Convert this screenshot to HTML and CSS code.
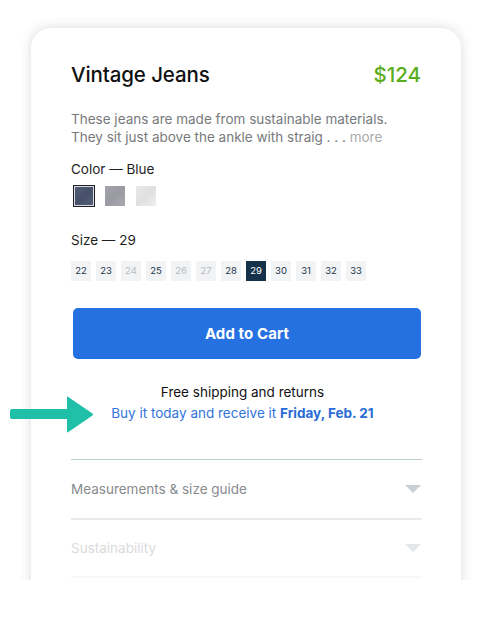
FILE: index.html
```html
<!DOCTYPE html>
<html lang="en">
<head>
<meta charset="utf-8">
<title>Vintage Jeans</title>
<link rel="stylesheet" href="styles.css">
</head>
<body>
<div class="stage">
  <div class="card">
    <div class="head">
      <h1 class="title">Vintage Jeans</h1>
      <span class="price">$124</span>
    </div>
    <p class="desc">These jeans are made from sustainable materials. They sit just above the ankle with straig . . . <span class="more">more</span></p>
    <div class="label">Color — Blue</div>
    <div class="swatches">
      <span class="swatch blue selected"></span>
      <span class="swatch grey"></span>
      <span class="swatch white"></span>
    </div>
    <div class="label size-label">Size — 29</div>
    <div class="sizes">
      <span class="size">22</span>
      <span class="size">23</span>
      <span class="size off">24</span>
      <span class="size">25</span>
      <span class="size off">26</span>
      <span class="size off">27</span>
      <span class="size">28</span>
      <span class="size on">29</span>
      <span class="size">30</span>
      <span class="size">31</span>
      <span class="size">32</span>
      <span class="size">33</span>
    </div>
    <button class="cart">Add to Cart</button>
    <div class="ship">
      <div>Free shipping and returns</div>
      <div class="deliver">Buy it today and receive it <b>Friday, Feb. 21</b></div>
    </div>
    <div class="acc first">
      <span>Measurements &amp; size guide</span>
      <span class="caret"></span>
    </div>
    <div class="acc second">
      <span>Sustainability</span>
      <span class="caret"></span>
    </div>
    <div class="acc-end"></div>
  </div>
  <svg class="arrow" width="84" height="38" viewBox="0 0 84 38" aria-hidden="true">
    <rect x="0" y="13" width="60" height="10" rx="2" fill="#20bfa8"/>
    <path d="M57 1.5 Q57 0 58.3 0.9 L82.5 17.6 Q83.5 18.5 82.5 19.4 L58.3 36.1 Q57 37 57 35.5 Z" fill="#20bfa8"/>
  </svg>
</div>
</body>
</html>
```
FILE: styles.css
```css
* { box-sizing: border-box; }
html, body { margin: 0; padding: 0; background: #fff; }
body { font-family: "Inter", "Noto Sans", sans-serif; color: #1a1a1a; }

.stage {
  position: relative;
  height: 580px;
  overflow: hidden;
  padding-top: 28px;
}

.card {
  margin-left: 31px;
  width: 430px;
  background: #fff;
  border-radius: 20px;
  box-shadow: 0 0 12px rgba(40, 50, 55, 0.18);
  padding: 33px 39px 60px 40px;
}

.head {
  display: flex;
  justify-content: space-between;
  align-items: baseline;
  height: 28px;
}
.title {
  margin: 0;
  font-size: 20.5px;
  line-height: 28px;
  font-weight: 500;
  color: #111;
  letter-spacing: -0.1px;
}
.price {
  font-size: 20.5px;
  line-height: 28px;
  font-weight: 500;
  color: #5aac1a;
  margin-right: 1px;
}

.desc {
  margin: 21px 0 0;
  max-width: 325px;
  font-size: 13.5px;
  line-height: 18px;
  color: #777a7d;
}
.more { color: #a9abad; }

.label {
  margin-top: 14px;
  font-size: 13.5px;
  line-height: 18px;
  color: #1e1e1e;
}
.size-label { margin-top: 25px; }

.swatches {
  display: flex;
  gap: 11px;
  margin-top: 8px;
  padding-left: 3px;
}
.swatch {
  width: 20px;
  height: 20px;
  display: block;
}
.swatch.blue {
  background: linear-gradient(135deg, #535d78 0%, #475069 50%, #58617a 100%);
}
.swatch.grey {
  background: linear-gradient(135deg, #a5a5ad 0%, #9a9aa2 50%, #aaaab1 100%);
}
.swatch.white {
  background: linear-gradient(135deg, #e9e9e9 0%, #e0e0e0 50%, #efefef 100%);
}
.swatch.selected {
  box-shadow: inset 0 0 0 1px #d8dce4, 0 0 0 1px #1e1e22;
}

.sizes {
  display: flex;
  gap: 5px;
  margin-top: 12px;
}
.size {
  width: 20px;
  height: 20px;
  background: #f2f3f4;
  color: #23384b;
  font-size: 9.5px;
  line-height: 20px;
  text-align: center;
}
.size.off { color: #b9bcbf; }
.size.on { background: #16324a; color: #fff; }

.cart {
  display: block;
  width: 348px;
  height: 51px;
  margin: 27px 0 0 2px;
  border: 0;
  border-radius: 5px;
  background: #2571e1;
  color: #fff;
  font-family: inherit;
  font-size: 15px;
  font-weight: 700;
  letter-spacing: 0.1px;
}

.ship {
  margin-top: 23px;
  text-align: center;
  font-size: 13.5px;
  line-height: 21px;
  color: #111;
  padding-right: 8px;
}
.deliver { color: #3274dc; }
.deliver b { font-weight: 700; color: #2a6cd6; }

.acc {
  display: flex;
  justify-content: space-between;
  align-items: center;
  height: 59px;
  font-size: 13.5px;
}
.acc.first { margin-top: 35px; border-top: 1px solid #bdcaca; color: #888b8e; }
.acc.second { border-top: 2px solid #e9ecec; color: #d9dbdc; height: 58px; }
.acc-end { border-top: 2px solid #f7f8f8; height: 40px; }
.caret {
  width: 0;
  height: 0;
  border-left: 8px solid transparent;
  border-right: 8px solid transparent;
  border-top: 8px solid #c9d0d3;
  margin-right: 1px;
}
.acc.second .caret { border-top-color: #e3e7e9; }

.arrow {
  position: absolute;
  left: 10px;
  top: 396px;
}
```
